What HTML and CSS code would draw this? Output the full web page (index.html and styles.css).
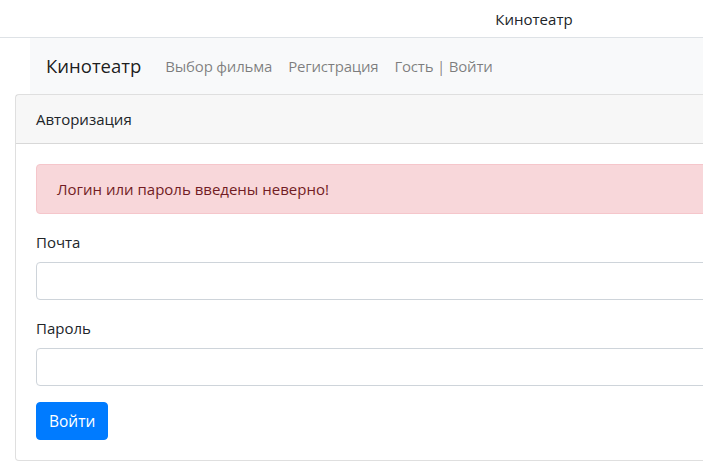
FILE: index.html
```html
<!DOCTYPE html>
<html lang="ru">
<head>
<meta charset="utf-8">
<title>Кинотеатр</title>
<link rel="stylesheet" href="styles.css">
</head>
<body>
<div class="page">
  <header class="topbar">Кинотеатр</header>
  <nav class="navbar">
    <a class="brand" href="#">Кинотеатр</a>
    <ul class="nav">
      <li><a class="nav-link" href="#">Выбор фильма</a></li>
      <li><a class="nav-link" href="#">Регистрация</a></li>
      <li><a class="nav-link" href="#">Гость | Войти</a></li>
    </ul>
  </nav>
  <div class="card">
    <div class="card-header">Авторизация</div>
    <div class="card-body">
      <div class="alert">Логин или пароль введены неверно!</div>
      <form>
        <div class="form-group">
          <label class="label" for="email">Почта</label>
          <input class="input" id="email" type="email">
        </div>
        <div class="form-group">
          <label class="label" for="pass">Пароль</label>
          <input class="input" id="pass" type="password">
        </div>
        <button class="btn" type="button">Войти</button>
      </form>
    </div>
  </div>
</div>
</body>
</html>
```
FILE: styles.css
```css
html, body {
  margin: 0;
  padding: 0;
  overflow: hidden;
  background: #fff;
}
body {
  font-family: "Open Sans", "Noto Sans", sans-serif;
  font-size: 15px;
  line-height: 24px;
  color: #212529;
}
.page {
  width: 1068px;
}
.topbar {
  text-align: center;
  padding: 7px 0 6px;
  height: 24px;
  border-bottom: 1px solid #dee2e6;
}
.navbar {
  display: flex;
  align-items: center;
  margin: 0 15px 0 30px;
  padding: 8px 16px;
  background: #f8f9fa;
}
.brand {
  font-size: 18.5px;
  line-height: 30px;
  padding: 5px 0;
  margin-right: 16px;
  color: rgba(0,0,0,.9);
  text-decoration: none;
}
.nav {
  display: flex;
  list-style: none;
  margin: 0;
  padding: 0;
}
.nav-link {
  display: block;
  padding: 8px;
  color: rgba(0,0,0,.5);
  text-decoration: none;
  letter-spacing: -0.2px;
}
.card {
  margin: 0 15px;
  border: 1px solid rgba(0,0,0,.125);
  border-radius: 4px;
  background: #fff;
}
.card-header {
  padding: 12px 20px;
  background: rgba(0,0,0,.03);
  border-bottom: 1px solid rgba(0,0,0,.125);
}
.card-body {
  padding: 20px;
}
.alert {
  padding: 12px 20px;
  margin-bottom: 16px;
  border: 1px solid #f5c6cb;
  border-radius: 4px;
  background: #f8d7da;
  color: #721c24;
}
.form-group {
  margin-bottom: 16px;
}
.label {
  display: inline-block;
  margin-bottom: 8px;
}
.input {
  display: block;
  box-sizing: border-box;
  width: 100%;
  height: 38px;
  padding: 6px 12px;
  font: inherit;
  border: 1px solid #ced4da;
  border-radius: 4px;
  background: #fff;
}
.btn {
  display: block;
  padding: 6px 12px;
  font: inherit;
  font-size: 15.5px;
  line-height: 24px;
  color: #fff;
  background: #007bff;
  border: 1px solid #007bff;
  border-radius: 4px;
}
```
